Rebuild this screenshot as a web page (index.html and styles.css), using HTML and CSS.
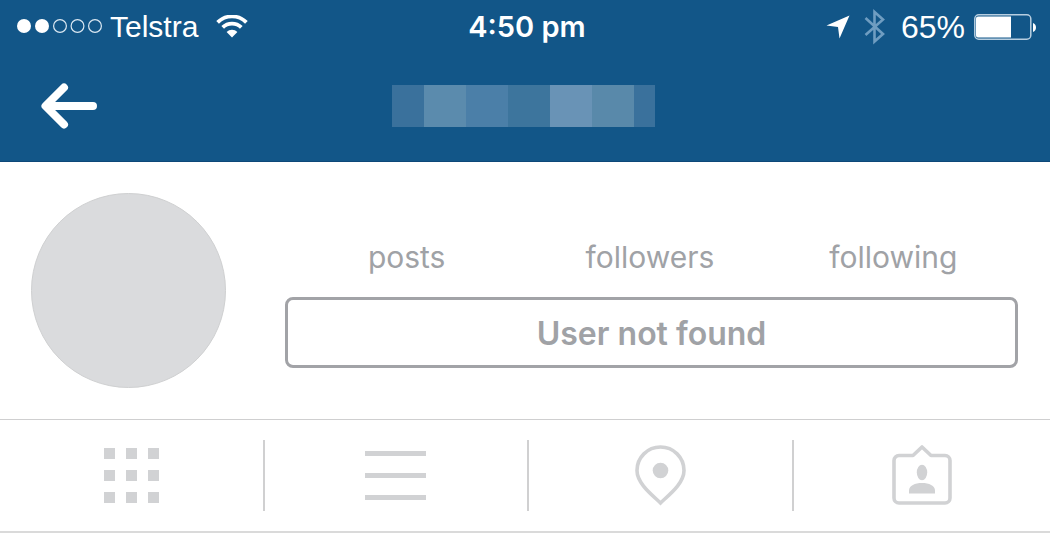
FILE: index.html
```html
<!DOCTYPE html>
<html lang="en">

<head>
    <meta charset="UTF-8">
    <meta name="viewport" content="width=device-width, initial-scale=1.0">
    <title>Profile</title>
    <link rel="stylesheet" href="styles.css">
</head>

<body>
    <header class="header">
        <div class="status-bar">
            <div class="status-left">
                <svg class="signal" width="86" height="16" viewBox="0 0 86 16" aria-hidden="true">
                    <g fill="#fff">
                        <circle cx="7" cy="7" r="7" />
                        <circle cx="25" cy="7" r="7" />
                    </g>
                    <g fill="none" stroke="#dbe8f2" stroke-width="1.2">
                        <circle cx="43" cy="7" r="6.4" />
                        <circle cx="60.5" cy="7" r="6.4" />
                        <circle cx="78" cy="7" r="6.4" />
                    </g>
                </svg>
                <span class="carrier">Telstra</span>
                <svg class="wifi" width="32" height="24" viewBox="0 0 32 24" aria-hidden="true">
                    <g fill="none" stroke="#fff" stroke-width="3.8">
                        <path d="M1.6 7.4a20.4 20.4 0 0 1 28.8 0" />
                        <path d="M6.7 12.4a13.2 13.2 0 0 1 18.6 0" />
                    </g>
                    <path fill="#fff" d="M10.6 17a7.7 7.7 0 0 1 10.8 0L16 22.5z" />
                </svg>
            </div>
            <div class="time">4:50 pm</div>
            <div class="status-right">
                <svg class="location" width="24" height="24" viewBox="0 0 24 24" aria-hidden="true">
                    <path fill="#fff" d="M23.5.5 13.5 23.5 12 12 .5 10.5z" />
                </svg>
                <svg class="bluetooth" width="22" height="36" viewBox="0 0 22 36" aria-hidden="true">
                    <path fill="none" stroke="#6f9dc1" stroke-width="2.6" d="M1.500 9 19 25l-8.500 7.500V3L19 10.500 1.500 26" />
                </svg>
                <span class="percent">65%</span>
                <svg class="battery" width="63" height="26" viewBox="0 0 63 26" aria-hidden="true">
                    <rect x=".8" y=".8" width="56" height="24.4" rx="4" fill="none" stroke="#b7cee0" stroke-width="1.5" />
                    <path fill="#fff" d="M4 2.500h33v21H4a2 2 0 0 1-2-2v-17a2 2 0 0 1 2-2zM59 9c4 1 4 8 0 9z" />
                </svg>
            </div>
        </div>
        <nav class="nav-bar">
            <button class="back" type="button" aria-label="Back">
                <svg width="56" height="46" viewBox="0 0 56 46" aria-hidden="true">
                    <path fill="none" stroke="#fff" stroke-width="8" stroke-linecap="round" stroke-linejoin="round" d="M23 4.500 4.500 23 23 41.500M6 23h46" />
                </svg>
            </button>
            <div class="username">
                <span class="block narrow tone-1"></span>
                <span class="block tone-2"></span>
                <span class="block tone-3"></span>
                <span class="block tone-4"></span>
                <span class="block tone-5"></span>
                <span class="block tone-6"></span>
                <span class="block half tone-1"></span>
            </div>
        </nav>
    </header>

    <main>
        <section class="profile">
            <div class="avatar"></div>
            <div class="info">
                <div class="stats">
                    <span>posts</span>
                    <span>followers</span>
                    <span>following</span>
                </div>
                <button class="follow" type="button">User not found</button>
            </div>
        </section>

        <div class="tabs">
            <button class="tab" type="button" aria-label="Grid">
                <svg width="55" height="55" viewBox="0 0 55 55" aria-hidden="true">
                    <path fill="#d1d2d4" d="M0 0h11v11H0zM22 0h11v11H22zM44 0h11v11H44zM0 22h11v11H0zM22 22h11v11H22zM44 22h11v11H44zM0 44h11v11H0zM22 44h11v11H22zM44 44h11v11H44z" />
                </svg>
            </button>
            <button class="tab" type="button" aria-label="List">
                <svg width="61" height="49" viewBox="0 0 61 49" aria-hidden="true">
                    <path fill="#d1d2d4" d="M0 0h61v5H0zM0 22h61v5H0zM0 44h61v5H0z" />
                </svg>
            </button>
            <button class="tab" type="button" aria-label="Map">
                <svg width="52" height="62" viewBox="0 0 52 62" aria-hidden="true">
                    <path fill="none" stroke="#d1d2d4" stroke-width="3.6" d="M26.500 58C19.500 51 3 39 3 25.500a23.500 23.500 0 0 1 47 0C50 39 33.500 51 26.500 58z" />
                    <circle cx="26.5" cy="25.500" r="7.8" fill="#d1d2d4" />
                </svg>
            </button>
            <button class="tab" type="button" aria-label="Tagged">
                <svg width="60" height="62" viewBox="0 0 60 62" aria-hidden="true">
                    <path fill="none" stroke="#d1d2d4" stroke-width="3.6" stroke-linejoin="round" d="M7 10.500h14l9-8.500 9 8.500h14a5 5 0 0 1 5 5V53a5 5 0 0 1-5 5H7a5 5 0 0 1-5-5V15.500a5 5 0 0 1 5-5z" />
                    <ellipse cx="30" cy="27.500" rx="5.2" ry="7.8" fill="#d1d2d4" />
                    <path fill="#d1d2d4" d="M17 48.500v-3c0-5 6-7.500 13-7.500s13 2.500 13 7.500v3z" />
                </svg>
            </button>
        </div>
    </main>
</body>

</html>
```

FILE: styles.css
```css
* {
    box-sizing: border-box;
}

body {
    margin: 0;
    background: #fff;
    color: #a0a2a6;
    font-family: Inter, "Liberation Sans", sans-serif;
}

button {
    padding: 0;
    border: 0;
    background: none;
    color: inherit;
    font-family: inherit;
    cursor: pointer;
}

svg {
    display: block;
    flex: none;
}

/* header */
.header {
    background: #125688;
    border-bottom: 1px solid #0d4878;
    color: #fff;
}

.status-bar {
    display: grid;
    grid-template-columns: 1fr auto 1fr;
    align-items: center;
    height: 53px;
    padding: 0 13px 0 17px;
    font-family: "Liberation Sans", sans-serif;
    font-size: 30px;
    line-height: 36px;
}

.status-left,
.status-right {
    display: flex;
    align-items: center;
}

.status-right {
    justify-content: flex-end;
}

.carrier {
    margin: 0 18px 0 7px;
}

.time {
    font-family: Inter, sans-serif;
    font-size: 29px;
    font-weight: 600;
}

.bluetooth {
    margin: 0 15px 0 14px;
}

.percent {
    margin-right: 9px;
    font-size: 32px;
}

.nav-bar {
    display: grid;
    grid-template-columns: 1fr auto 1fr;
    align-items: center;
    height: 108px;
    padding: 0 44px 2px 41px;
}

.back {
    justify-self: start;
}

.username {
    display: flex;
}

.block {
    width: 42px;
    height: 42px;
}

.narrow {
    width: 32px;
}

.half {
    width: 21px;
}

.tone-1 {
    background: #3a719c;
}

.tone-2 {
    background: #5b8bad;
}

.tone-3 {
    background: #4b7fa8;
}

.tone-4 {
    background: #3d759d;
}

.tone-5 {
    background: #6993b6;
}

.tone-6 {
    background: #5989aa;
}

/* profile */
.profile {
    display: flex;
    align-items: flex-end;
    gap: 59px;
    padding: 31px 32px 31px 31px;
}

.avatar {
    flex: none;
    width: 195px;
    height: 195px;
    border: 1px solid #cfd0d1;
    border-radius: 50%;
    background: #dadbdd;
}

.info {
    flex: 1;
    padding-bottom: 20px;
}

.stats {
    display: grid;
    grid-template-columns: repeat(3, 1fr);
    margin-bottom: 22px;
    padding-right: 3px;
    font-size: 30px;
    line-height: 36px;
    text-align: center;
}

.follow {
    display: block;
    width: 100%;
    height: 71px;
    padding-top: 2px;
    border: 3px solid #a2a3a7;
    border-radius: 8px;
    font-size: 32px;
    font-weight: 600;
}

/* tabs */
.tabs {
    display: grid;
    grid-template-columns: 33fr 33fr 33fr 32fr;
    padding: 20px 0;
    border-top: 1px solid #cfcfd0;
    border-bottom: 2px solid #dadada;
}

.tab {
    display: flex;
    align-items: center;
    justify-content: center;
    height: 71px;
    border-right: 2px solid #d0d0d1;
}

.tab:last-child {
    border-right: 0;
}
```
